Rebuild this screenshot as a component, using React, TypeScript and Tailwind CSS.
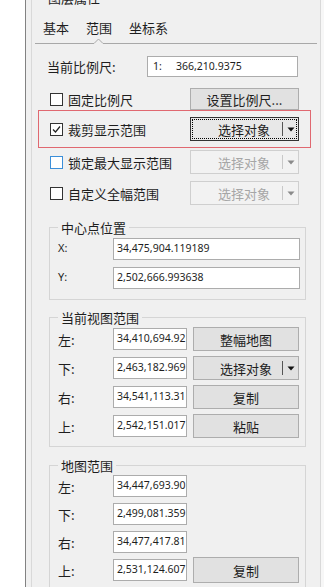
import React from "react";

const cjk = "font-['Noto_Sans_CJK_SC','Noto_Sans',sans-serif]";
const num = "font-['Noto_Sans','Liberation_Sans',sans-serif]";

function Check({ checked = false, hover = false }: { checked?: boolean; hover?: boolean }) {
  return (
    <span
      className={`w-[13px] h-[13px] shrink-0 bg-white border flex items-center justify-center ${
        hover ? "border-[#3c8fd9]" : "border-[#333333]"
      }`}
    >
      {checked && (
        <svg width="11" height="11" viewBox="0 0 11 11">
          <polyline points="2,5.5 4.5,8 9,2.5" fill="none" stroke="#222" strokeWidth="1.2" />
        </svg>
      )}
    </span>
  );
}

function Arrow({ color }: { color: string }) {
  return (
    <svg width="8" height="5" viewBox="0 0 8 5">
      <polygon points="0.5,0.5 7.5,0.5 4,4.5" fill={color} />
    </svg>
  );
}

function SplitButton({
  state = "normal",
  width = "w-[109px]",
  pad = "pl-[27px]",
}: {
  state?: "normal" | "active" | "disabled";
  width?: string;
  pad?: string;
}) {
  const base =
    state === "disabled"
      ? "bg-[#f2f2f2] border-[#cfcfcf] text-[#a6a6a6]"
      : state === "active"
      ? "bg-[#e8e8e8] border-[#333333] text-[#1e1e1e] outline-1 outline-dotted outline-black -outline-offset-3"
      : "bg-[#e1e1e1] border-[#adadad] text-[#1e1e1e]";
  return (
    <div className={`${width} h-[24px] shrink-0 border flex items-center ${base}`}>
      <span className={`flex-1 ${pad} text-[13px] leading-[17px] whitespace-nowrap`}>选择对象</span>
      <span className={`w-px h-[14px] ${state === "disabled" ? "bg-[#c8c8c8]" : "bg-[#555555]"}`} />
      <span className="w-[15px] flex justify-center">
        <Arrow color={state === "disabled" ? "#8a8a8a" : "#111"} />
      </span>
    </div>
  );
}

function Button({ label, width = "w-[106px]", height = "h-[24px]" }: { label: string; width?: string; height?: string }) {
  return (
    <div
      className={`${width} ${height} shrink-0 bg-[#e1e1e1] border border-[#adadad] flex items-center justify-center text-[13px] leading-[17px] text-[#1e1e1e] whitespace-nowrap`}
    >
      {label}
    </div>
  );
}

function Field({ value, className = "" }: { value: string; className?: string }) {
  return (
    <div
      className={`h-[22px] shrink-0 bg-white border border-[#acacac] pl-[3px] flex items-center overflow-hidden whitespace-nowrap text-[10.5px] text-[#1e1e1e] ${num} ${className}`}
    >
      {value}
    </div>
  );
}

const viewRows = [
  { label: "左:", value: "34,410,694.92" },
  { label: "下:", value: "2,463,182.969" },
  { label: "右:", value: "34,541,113.31" },
  { label: "上:", value: "2,542,151.017" },
];

const mapRows = [
  { label: "左:", value: "34,447,693.90" },
  { label: "下:", value: "2,499,081.359" },
  { label: "右:", value: "34,477,417.81" },
  { label: "上:", value: "2,531,124.607" },
];

export default function App() {
  return (
    <div className={`flex w-[324px] h-[587px] overflow-hidden bg-[#f0f0f0] text-[#1e1e1e] ${cjk}`}>
      <div className="w-[26px] shrink-0 bg-white border-r border-[#828282]" />
      <div className="w-[5px] shrink-0" />
      <div className="w-[290px] shrink-0 border-l border-r border-[#d9d9d9] flex flex-col [&>*]:shrink-0">
        <div className="h-[17px] -mt-[11px] pl-[16px] text-[13px] leading-[17px]">图层属性</div>

        {/* tabs */}
        <div className="flex pl-[11px] gap-[17px] mt-[13px] text-[13px] leading-[17px]">
          <span>基本</span>
          <span>范围</span>
          <span>坐标系</span>
        </div>
        <svg className="ml-[3px] mt-[2px]" width="282" height="6" viewBox="0 0 282 6">
          <polyline points="0,5.5 59,5.5 63.5,1 68,5.5 282,5.5" fill="none" stroke="#a8a8a8" strokeWidth="1" />
        </svg>

        {/* scale */}
        <div className="mt-[12px] h-[21px] flex items-center pl-[15px]">
          <span className="w-[100px] text-[13px] leading-[17px]">当前比例尺:</span>
          <div className={`w-[151px] h-[21px] bg-white border border-[#acacac] pl-[5px] flex items-center text-[10.5px] ${num}`}>
            <span className="w-[23px]">1:</span>
            <span>366,210.9375</span>
          </div>
        </div>

        <div className="mt-[11px] h-[22px] flex items-center pl-[18px] pr-[21px]">
          <Check />
          <span className="ml-[5px] text-[13px] leading-[17px]">固定比例尺</span>
          <div className="ml-auto">
            <Button label="设置比例尺..." width="w-[109px]" height="h-[22px]" />
          </div>
        </div>

        <div className="ml-[6px] mr-[9px] h-[38px] border border-[#e06870] flex items-center pl-[11px] pr-[11px]">
          <Check checked />
          <span className="ml-[5px] text-[13px] leading-[17px]">裁剪显示范围</span>
          <div className="ml-auto">
            <SplitButton state="active" />
          </div>
        </div>

        <div className="mt-[2px] h-[24px] flex items-center pl-[18px] pr-[21px]">
          <Check hover />
          <span className="ml-[5px] text-[13px] leading-[17px]">锁定最大显示范围</span>
          <div className="ml-auto">
            <SplitButton state="disabled" />
          </div>
        </div>

        <div className="mt-[7px] h-[24px] flex items-center pl-[18px] pr-[21px]">
          <Check />
          <span className="ml-[5px] text-[13px] leading-[17px]">自定义全幅范围</span>
          <div className="ml-auto">
            <SplitButton state="disabled" />
          </div>
        </div>

        {/* center point */}
        <fieldset className="mt-[14px] ml-[17px] w-[257px] border border-[#d5d5d5] pl-[8px] pr-[5px] pb-[11px]">
          <legend className="px-[3px] text-[13px] leading-[17px]">中心点位置</legend>
          <div className="mt-[2px] h-[21px] flex items-center">
            <span className={`w-[55px] text-[11px] ${num}`}>X:</span>
            <Field value="34,475,904.119189" className="flex-1 h-[21px]" />
          </div>
          <div className="mt-[8px] h-[21px] flex items-center">
            <span className={`w-[55px] text-[11px] ${num}`}>Y:</span>
            <Field value="2,502,666.993638" className="flex-1 h-[21px]" />
          </div>
        </fieldset>

        {/* current view extent */}
        <fieldset className="mt-[9px] ml-[17px] w-[257px] border border-[#d5d5d5] pl-[8px] pr-[5px] pb-[8px]">
          <legend className="px-[3px] text-[13px] leading-[17px]">当前视图范围</legend>
          <div className="mt-[1px] flex flex-col gap-[5px]">
            {viewRows.map((row, i) => (
              <div key={i} className="h-[24px] flex items-center">
                <span className="w-[55px] text-[13px] leading-[17px]">{row.label}</span>
                <Field value={row.value} className="w-[74px]" />
                <div className="ml-[6px]">
                  {i === 0 && <Button label="整幅地图" />}
                  {i === 1 && <SplitButton width="w-[106px]" pad="pl-[26px]" />}
                  {i === 2 && <Button label="复制" />}
                  {i === 3 && <Button label="粘贴" />}
                </div>
              </div>
            ))}
          </div>
        </fieldset>

        {/* map extent */}
        <fieldset className="mt-[10px] ml-[17px] w-[257px] border border-[#d5d5d5] pl-[8px] pr-[5px] pb-[8px]">
          <legend className="px-[3px] text-[13px] leading-[17px]">地图范围</legend>
          <div className="mt-[1px] flex flex-col gap-[6px]">
            {mapRows.map((row, i) => (
              <div key={i} className="h-[22px] flex items-center">
                <span className="w-[55px] text-[13px] leading-[17px]">{row.label}</span>
                <Field value={row.value} className="w-[74px]" />
                {i === 3 && (
                  <div className="ml-[6px]">
                    <Button label="复制" height="h-[26px]" />
                  </div>
                )}
              </div>
            ))}
          </div>
        </fieldset>
      </div>
      <div className="flex-1 bg-[#f7f7f7]" />
    </div>
  );
}
